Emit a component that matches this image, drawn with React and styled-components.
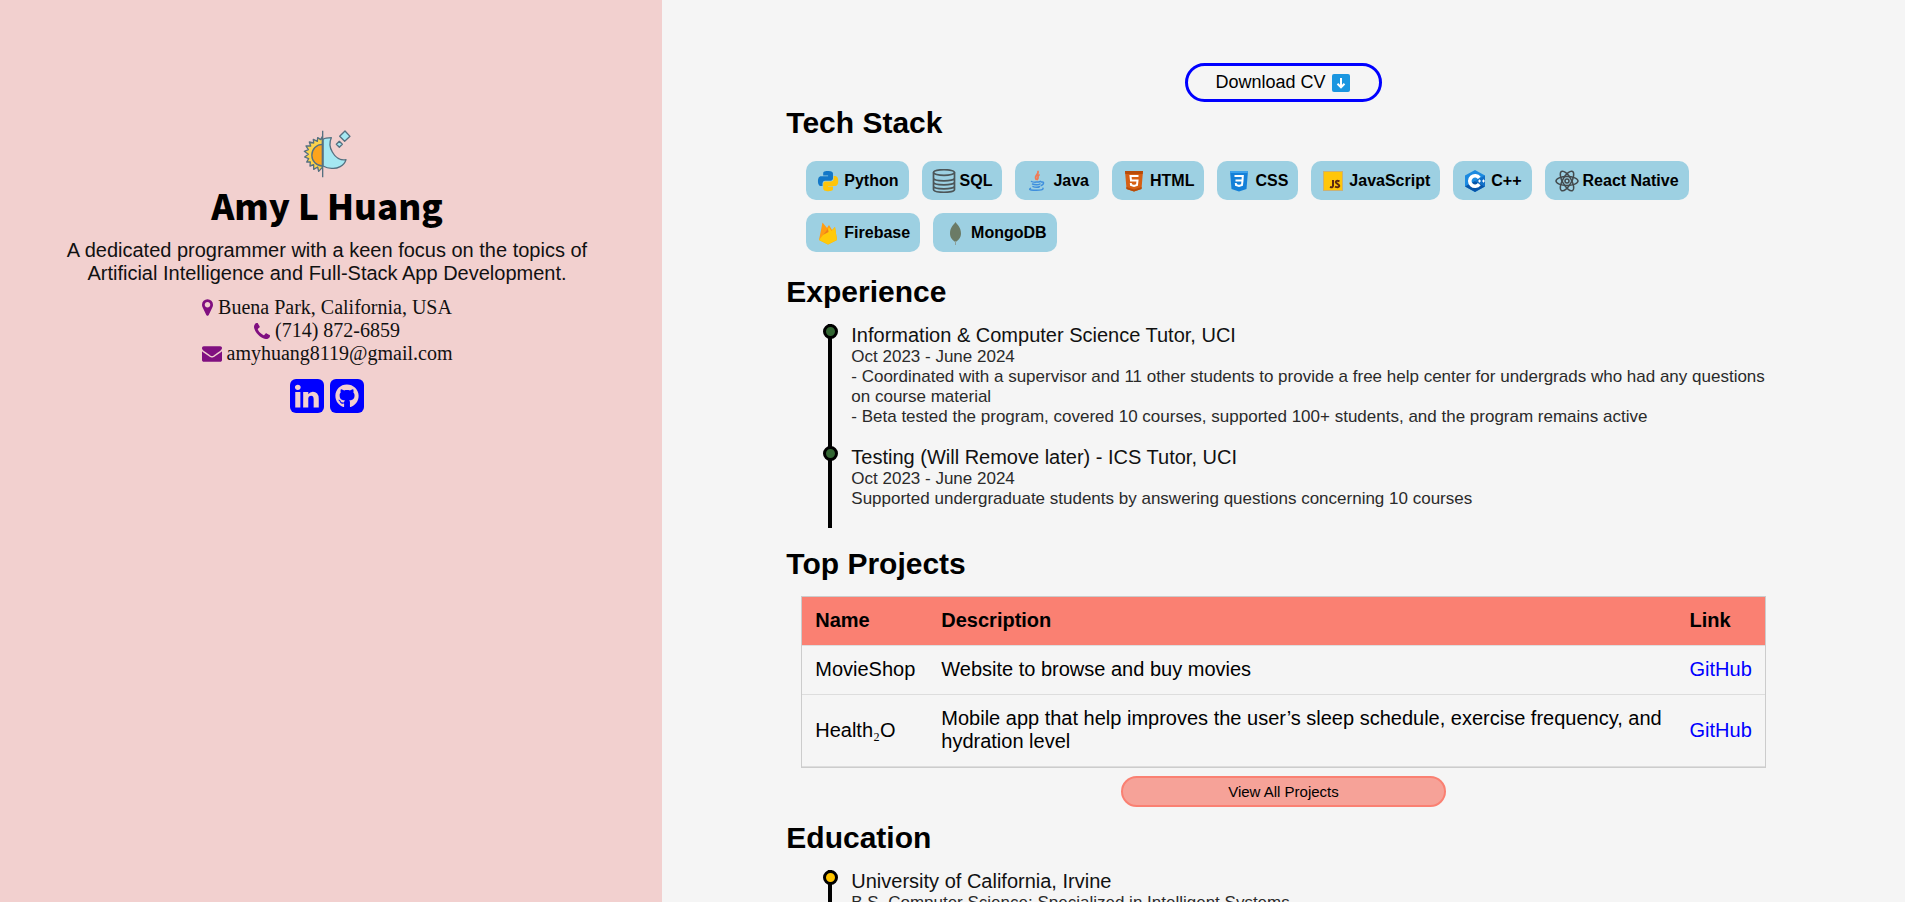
import React from "react";
import styled, { createGlobalStyle } from "styled-components";
import { FaGithub } from "react-icons/fa";

const GlobalStyle = createGlobalStyle`
  *, *::before, *::after { box-sizing: border-box; }
  body {
    margin: 0;
    background: #f5f5f5;
    color: #000;
    font-family: "Liberation Sans", Arial, sans-serif;
    font-size: 20px;
    line-height: 23px;
  }
  a { color: blue; text-decoration: none; }
`;

const Page = styled.div`
  display: grid;
  grid-template-columns: 662fr 1243fr;
  height: 100vh;
`;

const Sidebar = styled.aside`
  display: flex;
  flex-direction: column;
  align-items: center;
  padding: 130px 48px 40px 40px;
  background: #f2d0cf;
  text-align: center;
`;

const ThemeButton = styled.button`
  display: flex;
  padding: 0;
  border: 0;
  background: none;
  cursor: pointer;
`;

const Name = styled.h1`
  margin: 5px 0 12px;
  font-family: "Noto Sans CJK JP", "Open Sans", sans-serif;
  font-size: 35px;
  font-weight: 900;
  line-height: 44px;
`;

const Tagline = styled.p`
  max-width: 540px;
  margin: 0 0 11px;
  color: #111;
`;

const Contact = styled.address`
  display: flex;
  flex-direction: column;
  align-items: center;
  color: #111;
  font-family: "Liberation Serif", "Times New Roman", serif;
  font-style: normal;
`;

const ContactLine = styled.span`
  display: flex;
  align-items: center;
  gap: 5px;

  svg { fill: #800f80; }
`;

const Socials = styled.nav`
  display: flex;
  gap: 6px;
  margin-top: 14px;
`;

const SocialLink = styled.a`
  display: flex;
  align-items: center;
  justify-content: center;
  width: 34px;
  height: 34px;
  border-radius: 6px;
  background: blue;
  color: #f2d0cf;
`;

const Content = styled.main`
  padding: 63px 10% 0;
  overflow: hidden;
`;

const Section = styled.section`
  margin-bottom: ${(p) => p.$after ?? 19}px;
`;

const Heading = styled.h2`
  margin: 0 0 15px;
  font-size: 30px;
  line-height: 34px;
`;

const Centered = styled.div`
  display: flex;
  justify-content: center;
`;

const DownloadButton = styled.button`
  display: flex;
  align-items: center;
  gap: 6px;
  height: 39px;
  margin-bottom: 4px;
  padding: 0 29px 0 27px;
  border: 3px solid blue;
  border-radius: 20px;
  background: transparent;
  color: #000;
  font-family: inherit;
  font-size: 18px;
`;

const ViewAllButton = styled.button`
  width: 325px;
  height: 31px;
  border: 2px solid salmon;
  border-radius: 16px;
  background: #f6a298;
  color: #000;
  font-family: inherit;
  font-size: 15px;
`;

const Stack = styled.ul`
  display: flex;
  flex-wrap: wrap;
  gap: 13px;
  margin: 0;
  padding: 6px 20px 4px;
  list-style: none;
`;

const Skill = styled.li`
  display: flex;
  align-items: center;
  gap: 4px;
  height: 39px;
  padding: 0 10px;
  border-radius: 10px;
  background: #9dd0e2;
  font-size: 16px;
  font-weight: 700;
`;

const Timeline = styled.ol`
  margin: 0;
  padding: 0 0 0 42px;
  list-style: none;
`;

const TimelineItem = styled.li`
  position: relative;
  padding: 0 0 19px 19px;
  border-left: 4px solid #000;

  &::before {
    content: "";
    position: absolute;
    top: 0;
    left: -9px;
    width: 15px;
    height: 15px;
    border: 3px solid #000;
    border-radius: 50%;
    background: ${(p) => p.$dot};
  }
`;

const ItemTitle = styled.h3`
  margin: 0;
  color: #111;
  font-size: 20px;
  font-weight: 400;
  line-height: 23px;
`;

const ItemText = styled.p`
  margin: 0;
  color: #2a2a2a;
  font-size: 17px;
  line-height: 20px;
`;

const ProjectTable = styled.table`
  width: 97%;
  margin: 0 auto 8px;
  border: 1px solid #ccc;
  border-spacing: 0;
  text-align: left;

  th, td {
    padding: 12px 13px 13px;
    border-bottom: 1px solid #ddd;
  }
  th { background: salmon; }
`;

const Subscript = styled.span`
  font-family: "Liberation Serif", "Times New Roman", serif;
`;

function DayNightIcon() {
  return (
    <svg width="48" height="48" viewBox="22 18 144 144" stroke="#557080" strokeWidth="4" strokeLinejoin="round" aria-hidden="true">
      <path fill="#fdd34b" d="M80 38L75 47L66 41L65 52L53 46L54 57L41 54L45 66L31 66L38 77L26 82L38 91L27 99L39 104L33 114L44 114L43 126L54 122L54 136L66 129L69 142L80 130Z" />
      <path fill="#fda41c" d="M80 61A31 32 0 0 0 80 126Z" />
      <path fill="#a5e8f2" d="M82 46C88 42 96 41 107 41C101 54 103 72 110 84C119 101 135 110 151 107C146 126 124 135 108 133C97 133 89 130 82 126Z" />
      <path d="M81 20V160" />
      <path fill="#a5e8f2" d="M148 21L163 37L147 52L132 37Z" />
      <path fill="#a5e8f2" d="M131 52L140 61L131 70L122 61Z" />
    </svg>
  );
}

function MarkerIcon() {
  return (
    <svg width="11" height="17" viewBox="384 128 1024 1536" aria-hidden="true">
      <path d="M1152 640q0-106-75-181t-181-75-181 75-75 181 75 181 181 75 181-75 75-181zM1408 640q0 109-33 179l-364 774q-16 33-47.500 52t-67.500 19-67.500-19-46.500-52l-365-774q-33-70-33-179 0-212 150-362t362-150 362 150 150 362z" />
    </svg>
  );
}

function PhoneIcon() {
  return (
    <svg width="16" height="16" viewBox="192 128 1408 1408" aria-hidden="true">
      <path d="M1600 1240q0 27-10 70.500t-21 68.500q-21 50-122 106-94 51-186 51-27 0-52.500-3.500t-57.500-12.500-47.500-14.500-55.500-20.500-49-18q-98-35-175-83-128-79-264.500-215.500t-215.500-264.500q-48-77-83-175-3-9-18-49t-20.500-55.500-14.500-47.500-12.500-57.500-3.500-52.500q0-92 51-186 56-101 106-122 25-11 68.500-21t70.500-10q14 0 21 3 18 6 53 76 11 19 30 54t35 63.500 31 53.500q3 4 17.500 25t21.500 35.500 7 28.500q0 20-28.500 50t-62 55-62 53-28.500 46q0 9 5 22.500t8.500 20.500 14 24 11.500 19q76 137 174 235t235 174q2 1 19 11.500t24 14 20.500 8.500 22.500 5q18 0 46-28.500t53-62 55-62 50-28.500q14 0 28.500 7t35.500 21.500 25 17.500q25 15 53.500 31t63.500 35 54 30q70 35 76 53 3 7 3 21z" />
    </svg>
  );
}

function MailIcon() {
  return (
    <svg width="20" height="16" viewBox="0 256 1792 1408" aria-hidden="true">
      <path d="M1792 710v794q0 66-47 113t-113 47h-1472q-66 0-113-47t-47-113v-794q44 49 101 87 362 246 497 345 57 42 92.500 65.500t94.500 48 110 24.500h2q51 0 110-24.500t94.500-48 92.500-65.500q170-123 498-345 57-39 100-87zM1792 416q0 79-49 151t-122 123q-376 261-468 325-10 7-42.500 31t-54 38.500-52 32.500-57.500 27-50 9h-2q-23 0-50-9t-57.500-27-52-32.500-54-38.500-42.500-31q-91-64-262-182.500t-205-142.500q-62-42-117-115.500t-55-136.500q0-78 41.500-130t118.500-52h1472q65 0 112.500 47t47.500 113z" />
    </svg>
  );
}

function LinkedInMark() {
  return (
    <svg width="34" height="34" viewBox="128 128 1536 1536" fill="currentColor" aria-hidden="true">
      <path d="M365 1414h231v-694h-231v694zM611 506q-1-52-36-86t-93-34-94.500 34-36.500 86q0 51 35.500 85.500t92.500 34.500h1q59 0 95-34.500t36-85.500zM1196 1414h231v-398q0-154-73-233t-193-79q-136 0-209 117h2v-101h-231q3 66 0 694h231v-388q0-38 7-56 15-35 45-59.500t74-24.500q116 0 116 157v371z" />
    </svg>
  );
}

function DownArrowIcon() {
  return (
    <svg width="18" height="18" viewBox="0 0 18 18" aria-hidden="true">
      <rect width="18" height="18" rx="2" fill="#1b96e0" />
      <path d="M9 4V13M5.500 9.800L9 13.300L12.500 9.800" fill="none" stroke="#fff" strokeWidth="2" />
    </svg>
  );
}

function SkillIcon({ children }) {
  return (
    <svg width="24" height="24" viewBox="0 0 24 24" aria-hidden="true">
      {children}
    </svg>
  );
}

const skills = [
  {
    name: "Python",
    icon: (
      <g transform="translate(2 2) scale(.84)">
        <path fill="#1378c8" d="M14.250.180l.9.2.73.260.590.3.450.320.340.340.250.340.160.330.1.3.040.260.020.2-.010.130V8.500l-.050.630-.130.550-.210.460-.260.380-.3.310-.330.250-.350.190-.350.140-.330.1-.3.070-.260.040-.210.020H8.770l-.690.050-.590.140-.5.220-.410.270-.330.320-.270.350-.2.360-.150.370-.1.350-.070.320-.040.270-.020.210v3.060H3.170l-.210-.030-.280-.070-.320-.120-.350-.180-.360-.260-.360-.360-.350-.460-.320-.590-.280-.730-.210-.880-.140-1.050-.050-1.230.060-1.220.160-1.040.240-.870.320-.710.360-.570.4-.440.420-.330.420-.240.4-.160.360-.1.320-.050.240-.010h.160l.060.010h8.160v-.830H6.180l-.010-2.750-.020-.370.050-.340.110-.310.170-.280.250-.260.310-.230.380-.2.440-.180.510-.150.580-.120.640-.1.710-.060.770-.040.840-.020 1.270.050z" />
        <path fill="#ffc50a" d="M21.040 6.110l.280.060.320.120.350.180.360.270.360.350.350.470.320.590.280.730.210.880.140 1.040.050 1.230-.060 1.230-.160 1.040-.240.860-.320.710-.360.570-.4.450-.420.330-.420.240-.4.160-.360.090-.320.050-.240.020-.160-.010h-8.220v.820h5.840l.010 2.760.020.360-.050.340-.110.310-.170.290-.250.250-.310.240-.380.2-.440.170-.510.150-.580.130-.640.090-.710.070-.770.040-.840.010-1.270-.040-1.070-.140-.9-.2-.730-.250-.590-.3-.450-.330-.340-.340-.250-.340-.160-.330-.1-.3-.040-.250-.020-.2.010-.130v-5.340l.050-.640.130-.540.210-.460.260-.380.3-.320.330-.240.350-.2.350-.140.330-.1.3-.060.260-.040.210-.020.130-.010h5.840l.690-.050.590-.140.5-.210.410-.280.330-.320.270-.350.2-.360.150-.360.1-.350.070-.320.040-.280.020-.210V6.070h2.090l.140.010z" />
      </g>
    ),
  },
  {
    name: "SQL",
    icon: (
      <g fill="none" stroke="#4c5558" strokeWidth="1.700">
        <ellipse cx="12" cy="3.500" rx="10.500" ry="2.800" />
        <path d="M1.500 3.500V20.500C1.500 24.200 22.500 24.200 22.500 20.500V3.500M1.500 9C1.500 12.700 22.500 12.700 22.500 9M1.500 13C1.500 16.700 22.500 16.700 22.500 13M1.500 17C1.500 20.700 22.500 20.700 22.500 17" />
      </g>
    ),
  },
  {
    name: "Java",
    icon: (
      <g fill="none" strokeLinecap="round">
        <path stroke="#f07a55" strokeWidth="1.800" d="M13 2.500C14 5.500 9 6 11 10.200M14 6C11.500 7.500 14.300 8.300 12.300 10.500" />
        <path stroke="#3f8fdd" strokeWidth="1.500" d="M6.500 12.500C8 13.500 14 13.200 15.500 12.300M7.500 15C9.500 16 13.500 16 15 15M8 17.600C10 18.500 13.500 18.500 14.500 17.600M16.500 13C19.500 12.300 19 15.500 16.300 16.500M5.500 19.300C2.500 21 8 21.300 11.500 21.300C15 21.300 18.500 20.800 18 19.300" />
      </g>
    ),
  },
  {
    name: "HTML",
    icon: (
      <g>
        <path fill="#d65f13" d="M3 2H21L19.500 20L12 22.500L4.500 20Z" />
        <path fill="#b84b08" d="M3 2H21L20.700 5H3.300ZM4.300 18L12 20.500L19.700 18L19.500 20L12 22.500L4.500 20Z" />
        <path fill="none" stroke="#fff" strokeWidth="2" d="M16.500 7H8.500L9 11.500H15.500L15 16L12 17L9 16L8.800 14" />
      </g>
    ),
  },
  {
    name: "CSS",
    icon: (
      <g>
        <path fill="#1480d8" d="M3 2H21L19.500 20L12 22.500L4.500 20Z" />
        <path fill="#3ba2ec" d="M3 2H21L20.800 4H3.200Z" />
        <path fill="none" stroke="#fff" strokeWidth="2" d="M7.500 7H15.800L15.500 11.500H8.500M15.500 11.500L15 16L12 17L9 16L8.800 14" />
      </g>
    ),
  },
  {
    name: "JavaScript",
    icon: (
      <g>
        <rect x="2.500" y="2.500" width="19" height="19" fill="#ffc60a" stroke="#c9b277" />
        <path fill="none" stroke="#5c2a10" strokeWidth="2" d="M12 11V17Q11.800 19 9 17.800M18.500 12.300Q14.800 11 14.800 13.200C15 15 18.500 14.700 18.300 17Q17.500 19.300 14 17.600" />
      </g>
    ),
  },
  {
    name: "C++",
    icon: (
      <g>
        <path fill="#1b8ae0" d="M12 1L22 6.500V17.500L12 23L2 17.500V6.500Z" />
        <path fill="#0755a8" d="M22 17.500L12 23L2 17.500L12 12Z" />
        <path fill="#1270c8" d="M22 6.500V17.500L12 12Z" />
        <path fill="none" stroke="#fff" strokeWidth="3.600" d="M16.300 8.800A5.300 5.300 0 1 0 16.300 15.200" />
        <path stroke="#fff" strokeWidth="1" d="M15 12H18M16.500 10.500V13.500M19 12H22M20.500 10.500V13.500" />
      </g>
    ),
  },
  {
    name: "React Native",
    icon: (
      <g fill="none" stroke="#434a4d" strokeWidth="1.500">
        <ellipse cx="12" cy="12" rx="11" ry="4.400" />
        <ellipse cx="12" cy="12" rx="11" ry="4.400" transform="rotate(60 12 12)" />
        <ellipse cx="12" cy="12" rx="11" ry="4.400" transform="rotate(120 12 12)" />
        <circle cx="12" cy="12" r="2" />
      </g>
    ),
  },
  {
    name: "Firebase",
    icon: (
      <g>
        <path fill="#ff9d13" d="M3 19L6.500 1.500L11 7L13 4L16 9L19 6L21 19L12 23.500Z" />
        <path fill="#ffca0a" d="M3 19L13 6.500L15.500 10L19 6L21 19L12 23.500Z" />
        <path fill="#ef7d1b" d="M7 14L12 7.500L12.500 11Z" />
      </g>
    ),
  },
  {
    name: "MongoDB",
    icon: (
      <g>
        <path fill="#6b7b66" d="M12.500 1C14 3.500 18 6 18 12.500C18 17 15 19.500 13 20.800H12C10 19.500 7 17 7 12.500C7 6 11 3.500 12.500 1Z" />
        <path stroke="#8fa09a" d="M12.500 20V24" />
      </g>
    ),
  },
];

const experience = [
  {
    title: "Information & Computer Science Tutor, UCI",
    lines: [
      "Oct 2023 - June 2024",
      "- Coordinated with a supervisor and 11 other students to provide a free help center for undergrads who had any questions on course material",
      "- Beta tested the program, covered 10 courses, supported 100+ students, and the program remains active",
    ],
  },
  {
    title: "Testing (Will Remove later) - ICS Tutor, UCI",
    lines: [
      "Oct 2023 - June 2024",
      "Supported undergraduate students by answering questions concerning 10 courses",
    ],
  },
];

const education = [
  {
    title: "University of California, Irvine",
    lines: ["B.S. Computer Science: Specialized in Intelligent Systems"],
  },
];

const projects = [
  {
    id: "movieshop",
    name: "MovieShop",
    description: "Website to browse and buy movies",
  },
  {
    id: "health2o",
    name: <>Health<Subscript>₂</Subscript>O</>,
    description:
      "Mobile app that help improves the user’s sleep schedule, exercise frequency, and hydration level",
  },
];

function Events({ items, dot }) {
  return (
    <Timeline>
      {items.map((item) => (
        <TimelineItem key={item.title} $dot={dot}>
          <ItemTitle>{item.title}</ItemTitle>
          {item.lines.map((line) => (
            <ItemText key={line}>{line}</ItemText>
          ))}
        </TimelineItem>
      ))}
    </Timeline>
  );
}

export default function App() {
  return (
    <>
      <GlobalStyle />
      <Page>
        <Sidebar>
          <ThemeButton type="button" aria-label="Toggle theme">
            <DayNightIcon />
          </ThemeButton>
          <Name>Amy L Huang</Name>
          <Tagline>
            A dedicated programmer with a keen focus on the topics of Artificial
            Intelligence and Full-Stack App Development.
          </Tagline>
          <Contact>
            <ContactLine><MarkerIcon />Buena Park, California, USA</ContactLine>
            <ContactLine><PhoneIcon />(714) 872-6859</ContactLine>
            <ContactLine><MailIcon />amyhuang8119@gmail.com</ContactLine>
          </Contact>
          <Socials>
            <SocialLink href="#linkedin" aria-label="LinkedIn"><LinkedInMark /></SocialLink>
            <SocialLink href="#github" aria-label="GitHub"><FaGithub size={24} /></SocialLink>
          </Socials>
        </Sidebar>
        <Content>
          <Centered>
            <DownloadButton type="button">Download CV<DownArrowIcon /></DownloadButton>
          </Centered>
          <Section>
            <Heading>Tech Stack</Heading>
            <Stack>
              {skills.map((skill) => (
                <Skill key={skill.name}>
                  <SkillIcon>{skill.icon}</SkillIcon>
                  {skill.name}
                </Skill>
              ))}
            </Stack>
          </Section>
          <Section>
            <Heading>Experience</Heading>
            <Events items={experience} dot="#336633" />
          </Section>
          <Section $after={14}>
            <Heading>Top Projects</Heading>
            <ProjectTable>
              <thead>
                <tr>
                  <th scope="col">Name</th>
                  <th scope="col">Description</th>
                  <th scope="col">Link</th>
                </tr>
              </thead>
              <tbody>
                {projects.map((project) => (
                  <tr key={project.id}>
                    <td>{project.name}</td>
                    <td>{project.description}</td>
                    <td><a href="#github">GitHub</a></td>
                  </tr>
                ))}
              </tbody>
            </ProjectTable>
            <Centered>
              <ViewAllButton type="button">View All Projects</ViewAllButton>
            </Centered>
          </Section>
          <Section>
            <Heading>Education</Heading>
            <Events items={education} dot="#ffc400" />
          </Section>
        </Content>
      </Page>
    </>
  );
}
